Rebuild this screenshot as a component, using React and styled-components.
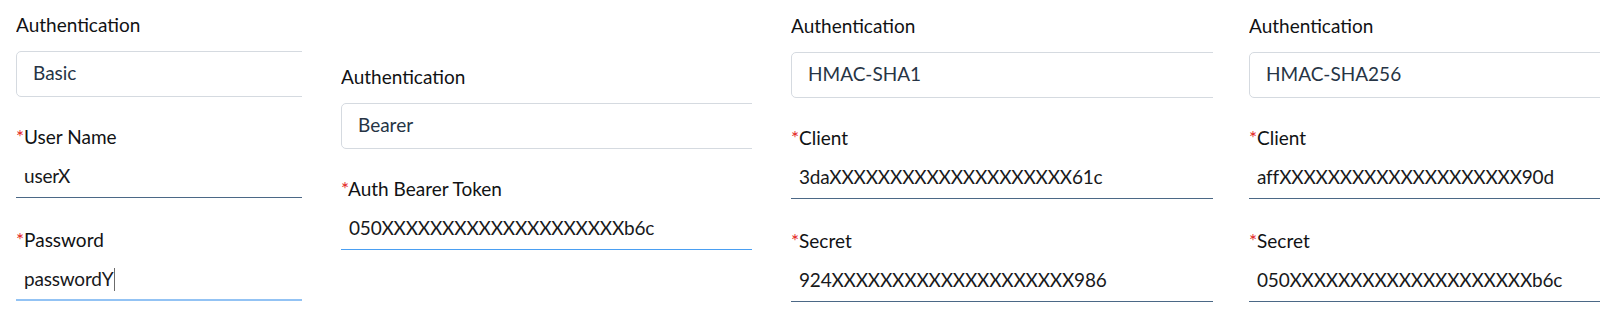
import React from "react";
import styled, { createGlobalStyle } from "styled-components";

const Global = createGlobalStyle`
  html, body { margin: 0; padding: 0; background: #ffffff; }
  body {
    font-family: Lato, "Noto Sans", sans-serif;
    -webkit-font-smoothing: antialiased;
  }
`;

const Row = styled.div`
  display: flex;
  width: 1600px;
  height: 328px;
  padding-left: 16px;
  box-sizing: border-box;
  overflow: hidden;
  background: #ffffff;
`;

const Panel = styled.section`
  flex: 0 0 ${(p) => p.$w}px;
  margin-right: ${(p) => p.$gap}px;
  padding-top: ${(p) => p.$top}px;
  overflow: hidden;
  box-sizing: border-box;
`;

const Label = styled.div`
  font-size: 19px;
  line-height: 24px;
  height: 24px;
  color: #111214;
  white-space: nowrap;
  margin-top: ${(p) => p.$mt || 0}px;
`;

const Req = styled.span`
  color: #e3241c;
`;

const Select = styled.div`
  margin-top: 14px;
  width: calc(100% + 24px);
  height: 46px;
  box-sizing: border-box;
  border: 1px solid #d5dae0;
  border-radius: 5px;
  background: #ffffff;
  display: flex;
  align-items: center;
  padding: 0 16px 2px;
  font-size: 19px;
  line-height: 24px;
  color: #263445;
  white-space: nowrap;
`;

const lineColors = {
  idle: "#4b6886",
  focus: "#4a9ff2",
  soft: "#93c3f4",
};

const Input = styled.div`
  margin-top: 7px;
  width: calc(100% + 24px);
  padding: 8px 8px ${(p) => (p.$thick ? 8 : 9)}px;
  font-size: 19px;
  line-height: 24px;
  height: 24px;
  letter-spacing: -0.2px;
  color: #18191b;
  white-space: nowrap;
  border-bottom: ${(p) => (p.$thick ? 2 : 1)}px solid ${(p) => lineColors[p.$state || "idle"]};
  display: flex;
  align-items: center;
`;

const Caret = styled.span`
  display: inline-block;
  width: 0;
  height: 23px;
  border-left: 1px solid #6b6b6b;
  margin-left: 1px;
`;

const Field = ({ label, value, state, thick, caret, mt }) => (
  <>
    <Label $mt={mt}>
      <Req>*</Req>
      {label}
    </Label>
    <Input $state={state} $thick={thick}>
      {value}
      {caret && <Caret />}
    </Input>
  </>
);

const X = "X".repeat(20);

export default function App() {
  return (
    <>
      <Global />
      <Row>
        <Panel $w={286} $gap={39} $top={13}>
          <Label>Authentication</Label>
          <Select>Basic</Select>
          <Field mt={28} label="User Name" value="userX" />
          <Field mt={30} label="Password" value="passwordY" state="soft" thick caret />
        </Panel>
        <Panel $w={411} $gap={39} $top={65}>
          <Label>Authentication</Label>
          <Select>Bearer</Select>
          <Field mt={28} label="Auth Bearer Token" value={`050${X}b6c`} state="focus" />
        </Panel>
        <Panel $w={422} $gap={36} $top={14}>
          <Label>Authentication</Label>
          <Select>HMAC-SHA1</Select>
          <Field mt={28} label="Client" value={`3da${X}61c`} />
          <Field mt={30} label="Secret" value={`924${X}986`} />
        </Panel>
        <Panel $w={400} $gap={0} $top={14}>
          <Label>Authentication</Label>
          <Select>HMAC-SHA256</Select>
          <Field mt={28} label="Client" value={`aff${X}90d`} />
          <Field mt={30} label="Secret" value={`050${X}b6c`} />
        </Panel>
      </Row>
    </>
  );
}
